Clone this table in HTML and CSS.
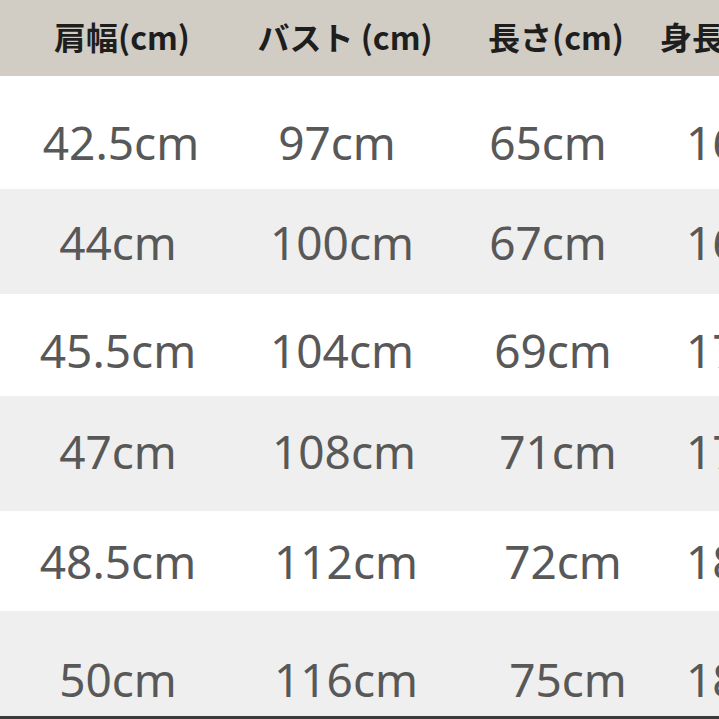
FILE: index.html
```html
<!DOCTYPE html>
<html lang="ja">
<head>
<meta charset="utf-8">
<link rel="stylesheet" href="styles.css">
</head>
<body>
<div class="table">
  <div class="row head">
    <div class="cell c1">肩幅(cm)</div>
    <div class="cell c2">バスト (cm)</div>
    <div class="cell c3">長さ(cm)</div>
    <div class="cell c4">身長(cm)</div>
  </div>
  <div class="row r1 white">
    <div class="cell c1">42.5cm</div>
    <div class="cell c2">97cm</div>
    <div class="cell c3">65cm</div>
    <div class="cell c4">160cm</div>
  </div>
  <div class="row r2 gray">
    <div class="cell c1">44cm</div>
    <div class="cell c2">100cm</div>
    <div class="cell c3">67cm</div>
    <div class="cell c4">165cm</div>
  </div>
  <div class="row r3 white">
    <div class="cell c1">45.5cm</div>
    <div class="cell c2">104cm</div>
    <div class="cell c3">69cm</div>
    <div class="cell c4">170cm</div>
  </div>
  <div class="row r4 gray">
    <div class="cell c1">47cm</div>
    <div class="cell c2">108cm</div>
    <div class="cell c3">71cm</div>
    <div class="cell c4">175cm</div>
  </div>
  <div class="row r5 white">
    <div class="cell c1">48.5cm</div>
    <div class="cell c2">112cm</div>
    <div class="cell c3">72cm</div>
    <div class="cell c4">180cm</div>
  </div>
  <div class="row r6 gray">
    <div class="cell c1">50cm</div>
    <div class="cell c2">116cm</div>
    <div class="cell c3">75cm</div>
    <div class="cell c4">185cm</div>
  </div>
</div>
</body>
</html>
```
FILE: styles.css
```css
html, body {
  margin: 0;
  padding: 0;
  background: #ffffff;
  overflow: hidden;
}
body {
  width: 719px;
  height: 719px;
}
.table {
  width: 900px;
  border-bottom: 3px solid #3a3a3a;
}
.row {
  display: grid;
  grid-template-columns: 236px 212px 212px 240px;
  align-items: center;
}
.cell {
  text-align: center;
  white-space: nowrap;
}
.cell.c4 {
  text-align: left;
}
.head {
  height: 76px;
  background: #d1cdc4;
  font-family: "Noto Sans CJK JP", "Noto Sans", sans-serif;
  font-weight: 700;
  font-size: 32px;
  color: #1e1e1e;
}
.head .cell {
  padding-bottom: 4px;
}
.head .c1 { padding-left: 8px; }
.head .c2 { padding-left: 6px; }
.head .c3 { padding-left: 4px; }
.head .c4 { padding-left: 0; }
.white { background: #ffffff; }
.gray { background: #efefef; }
.row:not(.head) {
  font-family: "Noto Sans", "DejaVu Sans", sans-serif;
  font-size: 46px;
  color: #585858;
}
.row:not(.head) .c4 { padding-left: 26px; }
.r1 { height: 113px; }
.r1 .cell { padding-top: 18px; }
.r1 .c1 { padding-left: 6px; }
.r2 { height: 105px; }
.r3 { height: 102px; }
.r3 .cell { padding-top: 10px; }
.r4 { height: 115px; }
.r4 .cell { padding-bottom: 6px; }
.r5 { height: 100px; }
.r6 { height: 105px; }
.r6 .cell { padding-top: 31px; }
.r1 .c2 { padding-right: 10px; }
.r4 .c2 { padding-left: 4px; }
.r5 .c2, .r6 .c2 { padding-left: 8px; }
.r1 .c3, .r2 .c3 { padding-right: 12px; }
.r3 .c3 { padding-right: 2px; }
.r4 .c3 { padding-left: 8px; }
.r5 .c3 { padding-left: 18px; }
.r6 .c3 { padding-left: 28px; }
```
